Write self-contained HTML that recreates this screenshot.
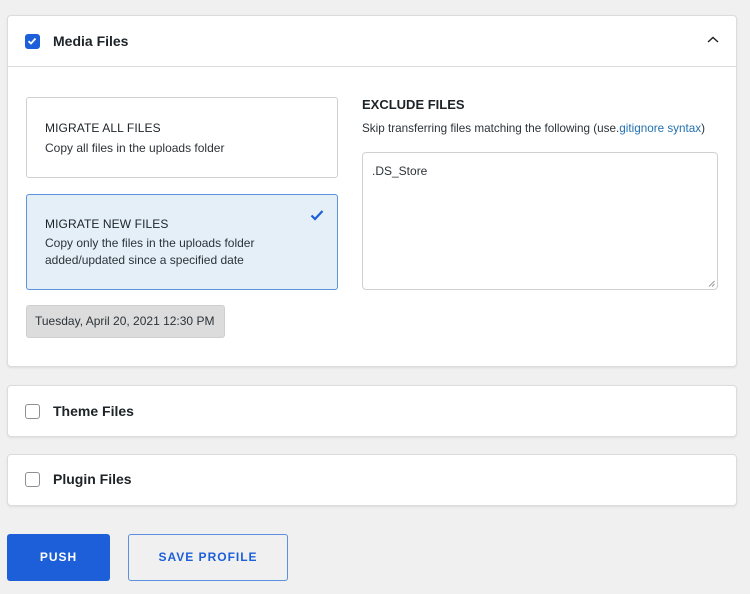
<!DOCTYPE html>
<html><head><style>
*{box-sizing:border-box;margin:0;padding:0}
body{width:750px;height:594px;background:#f0f0f0;font-family:"Liberation Sans",sans-serif;color:#1d2327;position:relative;overflow:hidden}
.abs{position:absolute}
.panel{position:absolute;left:7px;width:730px;background:#fff;border:1px solid #dcdcde;border-radius:4px;box-shadow:0 1px 2px rgba(0,0,0,.08)}
.cb{position:absolute;width:15px;height:15px;border:1.5px solid #8c8f94;border-radius:3px;background:#fff}
.title{position:absolute;font-size:14px;font-weight:bold;color:#1d2327}
.card{position:absolute;left:26px;width:312px;border:1px solid #d0d0d0;border-radius:3px;background:#fff;padding:0 18px}
.card h4{font-size:12px;font-weight:normal;color:#1d2327;letter-spacing:.1px}
.card p{font-size:12px;color:#2c3338;line-height:17px}
</style></head><body>
<div class="panel" style="top:15px;height:352px">
  <div class="abs" style="left:0;right:0;top:50px;border-top:1px solid #dcdcde"></div>
</div>
<div class="cb" style="left:25px;top:34px;background:#1d5fd8;border-color:#1d5fd8">
  <svg width="12" height="12" viewBox="0 0 12 12" style="position:absolute;left:0;top:0"><path d="M2.5 6.2 L5 8.5 L9.5 3.5" stroke="#fff" stroke-width="1.8" fill="none"/></svg>
</div>
<div class="title" style="left:53px;top:33px">Media Files</div>
<svg class="abs" style="left:706px;top:35px" width="14" height="10" viewBox="0 0 14 10"><path d="M2 7 L7 2.5 L12 7" stroke="#1d2327" stroke-width="1.4" fill="none"/></svg>

<div class="card" style="top:97px;height:81px;padding-top:23px">
  <h4>MIGRATE ALL FILES</h4><p style="margin-top:5px">Copy all files in the uploads folder</p>
</div>
<div class="card" style="top:194px;height:96px;padding-top:22px;background:#e5eff8;border-color:#5b93dc">
  <h4>MIGRATE NEW FILES</h4><p style="margin-top:4px">Copy only the files in the uploads folder<br>added/updated since a specified date</p>
  <svg class="abs" style="left:283px;top:14px" width="14" height="12" viewBox="0 0 14 12"><path d="M1.5 6.5 L5 10 L12.5 2" stroke="#1d5fd8" stroke-width="2.2" fill="none"/></svg>
</div>
<div class="abs" style="left:26px;top:305px;width:199px;height:33px;background:#dcdcdc;border:1px solid #cfcfcf;border-radius:3px;font-size:12px;color:#2c3338;line-height:31px;padding-left:8px">Tuesday, April 20, 2021 12:30 PM</div>

<div class="abs" style="left:362px;top:97px;font-size:13px;font-weight:bold;color:#1d2327">EXCLUDE FILES</div>
<div class="abs" style="left:362px;top:122px;font-size:11.7px;color:#2c3338;white-space:nowrap">Skip transferring files matching the following (use.<span style="color:#2271b1">gitignore syntax</span>)</div>
<div class="abs" style="left:362px;top:152px;width:356px;height:138px;border:1px solid #d0d0d0;border-radius:4px;background:#fff;font-size:12px;color:#2c3338;padding:11px 9px">.DS_Store
<svg class="abs" style="right:2px;bottom:2px" width="7" height="7" viewBox="0 0 7 7"><path d="M1 6.5 L6.5 1 M4 6.5 L6.5 4" stroke="#999" stroke-width="1"/></svg></div>

<div class="panel" style="top:385px;height:52px"></div>
<div class="cb" style="left:25px;top:404px"></div>
<div class="title" style="left:53px;top:403px">Theme Files</div>
<div class="panel" style="top:454px;height:52px"></div>
<div class="cb" style="left:25px;top:472px"></div>
<div class="title" style="left:53px;top:471px">Plugin Files</div>

<div class="abs" style="left:7px;top:534px;width:103px;height:47px;background:#1d5fd8;border-radius:3px;color:#fff;font-size:12px;font-weight:bold;letter-spacing:1px;text-align:center;line-height:47px">PUSH</div>
<div class="abs" style="left:128px;top:534px;width:160px;height:47px;border:1.5px solid #5b8fe0;border-radius:3px;color:#1d5fd8;font-size:12px;font-weight:bold;letter-spacing:1px;text-align:center;line-height:44px">SAVE PROFILE</div>
</body></html>
